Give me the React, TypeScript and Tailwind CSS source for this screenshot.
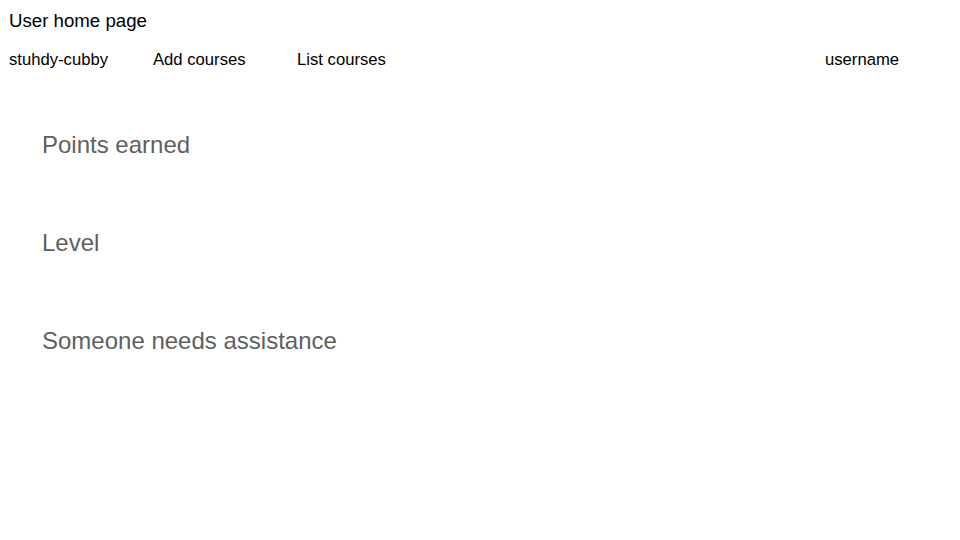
import React from "react";

export default function App() {
  const font = { fontFamily: '"Liberation Sans", Arial, sans-serif' };
  return (
    <div className="w-[960px] h-[540px] bg-white text-black" style={font}>
      <div className="pt-[9px] pl-[9px] text-[18.67px] leading-[24px]">User home page</div>
      <nav className="mt-[15px] flex text-[16.67px] leading-[24px]">
        <div className="pl-[9px] w-[153px]">stuhdy-cubby</div>
        <div className="w-[144px]">Add courses</div>
        <div className="w-[144px]">List courses</div>
        <div className="ml-auto w-[135px]">username</div>
      </nav>
      <main className="mt-[57px] pl-[42px] flex flex-col gap-[66px] text-[24px] leading-[32px] text-[#5f5f5f]">
        <h2>Points earned</h2>
        <h2>Level</h2>
        <h2>Someone needs assistance</h2>
      </main>
    </div>
  );
}
